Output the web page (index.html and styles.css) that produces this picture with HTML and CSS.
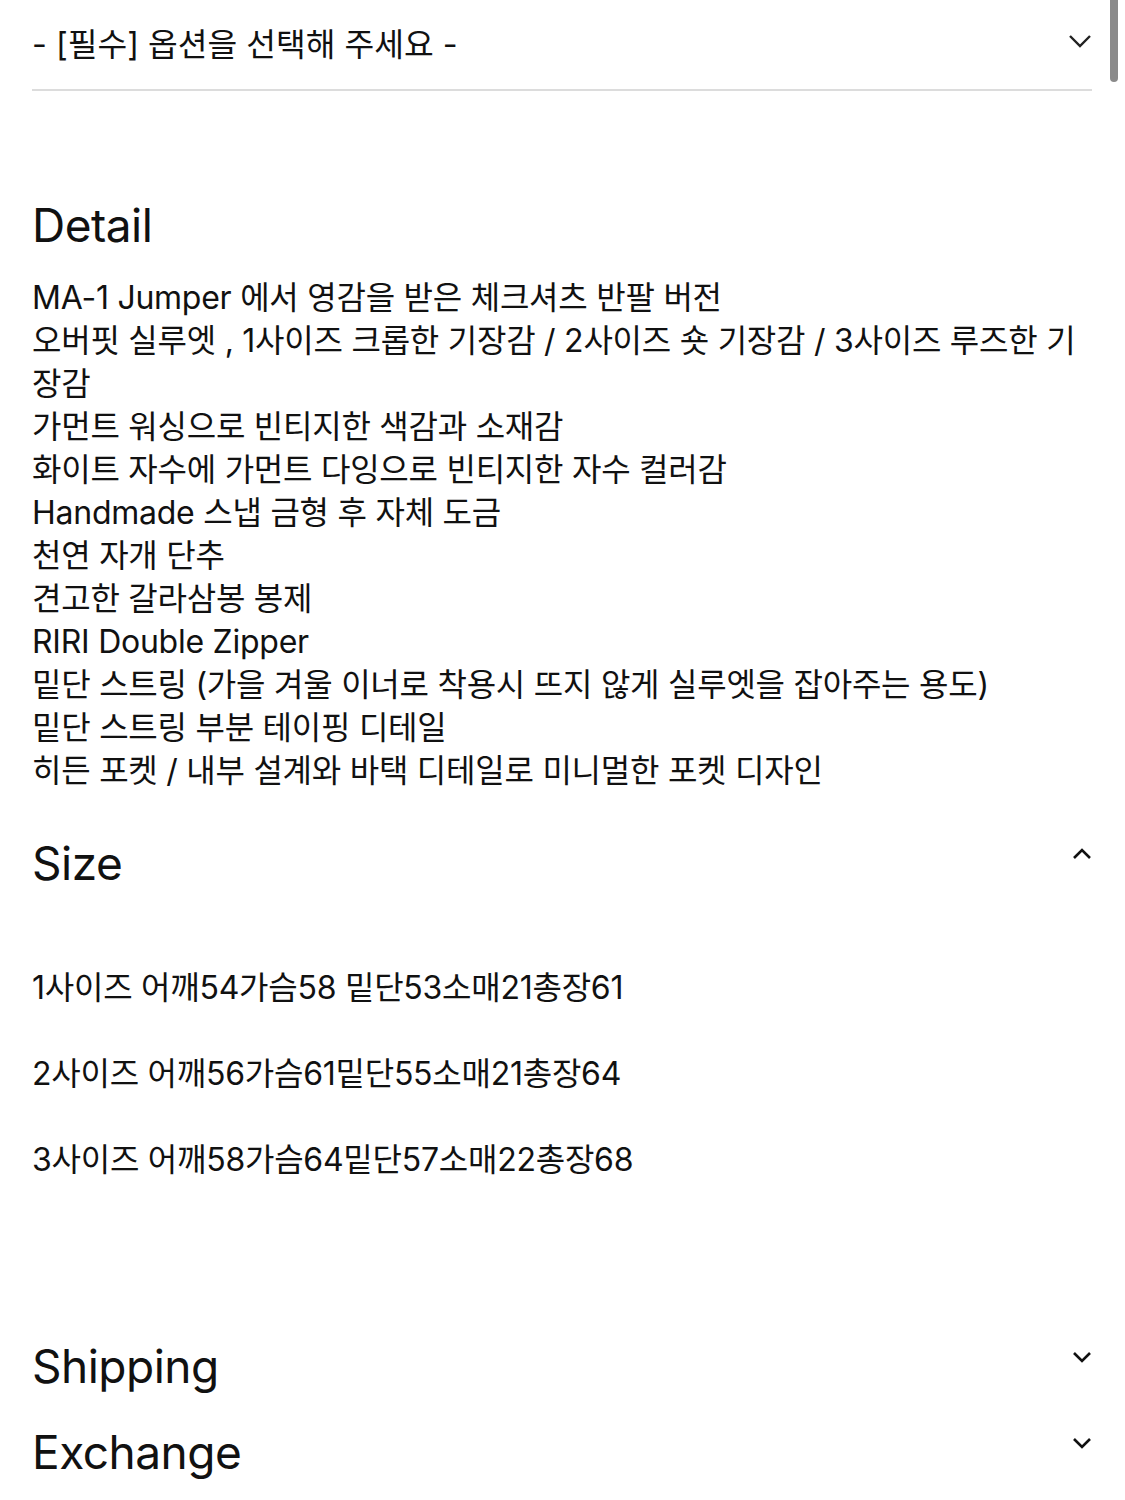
FILE: index.html
```html
<!DOCTYPE html>
<html lang="ko">
<head>
<meta charset="utf-8">
<link rel="stylesheet" href="styles.css">
</head>
<body>
<div class="page">
  <div class="select">
    <span class="select-text">- [필수] 옵션을 선택해 주세요 -</span>
    <svg class="chev" width="24" height="16" viewBox="0 0 24 16"><polyline points="2,3 12,13 22,3" fill="none" stroke="#222" stroke-width="2.4"/></svg>
  </div>

  <section class="detail">
    <h2 class="title">Detail</h2>
    <div class="body">
      <p>MA-1 Jumper 에서 영감을 받은 체크셔츠 반팔 버전</p>
      <p>오버핏 실루엣 , 1사이즈 크롭한 기장감 / 2사이즈 숏 기장감 / 3사이즈 루즈한 기장감</p>
      <p>가먼트 워싱으로 빈티지한 색감과 소재감</p>
      <p>화이트 자수에 가먼트 다잉으로 빈티지한 자수 컬러감</p>
      <p>Handmade 스냅 금형 후 자체 도금</p>
      <p>천연 자개 단추</p>
      <p>견고한 갈라삼봉 봉제</p>
      <p>RIRI Double Zipper</p>
      <p>밑단 스트링 (가을 겨울 이너로 착용시 뜨지 않게 실루엣을 잡아주는 용도)</p>
      <p>밑단 스트링 부분 테이핑 디테일</p>
      <p>히든 포켓 / 내부 설계와 바택 디테일로 미니멀한 포켓 디자인</p>
    </div>
  </section>

  <section class="size">
    <div class="acc-head">
      <h2 class="title">Size</h2>
      <svg class="chev" width="24" height="16" viewBox="0 0 24 16"><polyline points="4,12 12,4 20,12" fill="none" stroke="#111" stroke-width="2.6"/></svg>
    </div>
    <div class="body size-body">
      <p>1사이즈 어깨54가슴58 밑단53소매21총장61</p>
      <p>2사이즈 어깨56가슴61밑단55소매21총장64</p>
      <p>3사이즈 어깨58가슴64밑단57소매22총장68</p>
    </div>
  </section>

  <section class="closed first">
    <div class="acc-head">
      <h2 class="title">Shipping</h2>
      <svg class="chev" width="24" height="16" viewBox="0 0 24 16"><polyline points="4,4 12,12 20,4" fill="none" stroke="#111" stroke-width="2.6"/></svg>
    </div>
  </section>
  <section class="closed">
    <div class="acc-head">
      <h2 class="title">Exchange</h2>
      <svg class="chev" width="24" height="16" viewBox="0 0 24 16"><polyline points="4,4 12,12 20,4" fill="none" stroke="#111" stroke-width="2.6"/></svg>
    </div>
  </section>
</div>
<div class="scrollbar"></div>
</body>
</html>
```

FILE: styles.css
```css
html, body {
  margin: 0;
  padding: 0;
  background: #fff;
}
body {
  font-family: "Inter", "Noto Sans CJK KR", sans-serif;
  color: #111;
}
.page {
  padding: 0 33px 0 32px;
}
.select {
  height: 91px;
  border-bottom: 2px solid #dcdcdc;
  display: flex;
  align-items: center;
  justify-content: space-between;
  padding-bottom: 4px;
  box-sizing: border-box;
}
.select-text {
  font-size: 32.3px;
  letter-spacing: 0;
  color: #111;
  margin-top: -2px;
}
.select .chev {
  margin-right: 0;
  margin-top: -4px;
}
.title {
  margin: 0;
  font-weight: 400;
  font-size: 46px;
  line-height: 60px;
  letter-spacing: -0.5px;
  color: #111;
}
.detail {
  margin-top: 104px;
}
.body {
  font-size: 32px;
  line-height: 43px;
  letter-spacing: -0.25px;
}
.body p {
  margin: 0;
}
.detail .body {
  margin-top: 21px;
}
.size {
  margin-top: 41px;
}
.acc-head {
  display: flex;
  align-items: center;
  justify-content: space-between;
}
.acc-head .chev {
  margin-right: -2px;
  margin-top: -18px;
}
.size-body {
  margin-top: 73px;
}
.size-body p + p {
  margin-top: 43px;
}
.closed {
  height: 86px;
}
.closed.first {
  margin-top: 155px;
}
.scrollbar {
  position: fixed;
  top: 0;
  right: 7px;
  width: 8px;
  height: 82px;
  background: #8a8a8a;
  border-radius: 0 0 4px 4px;
}
```
